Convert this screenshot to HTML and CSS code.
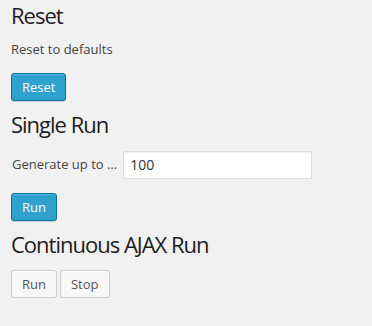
FILE: index.html
```html
<!DOCTYPE html>
<html>
<head>
<meta charset="utf-8">
<link rel="stylesheet" href="styles.css">
</head>
<body>
<div class="wrap">
  <section class="section">
    <h2 class="title">Reset</h2>
    <p class="desc">Reset to defaults</p>
    <div class="actions">
      <button class="btn btn-primary">Reset</button>
    </div>
  </section>
  <section class="section">
    <h2 class="title">Single Run</h2>
    <div class="field">
      <label class="label" for="count">Generate up to …</label>
      <input class="input" id="count" type="text" value="100">
    </div>
    <div class="actions">
      <button class="btn btn-primary">Run</button>
    </div>
  </section>
  <section class="section">
    <h2 class="title">Continuous AJAX Run</h2>
    <div class="actions actions-row">
      <button class="btn">Run</button>
      <button class="btn">Stop</button>
    </div>
  </section>
</div>
</body>
</html>
```
FILE: styles.css
```css
html, body {
  margin: 0;
  padding: 0;
  background: #f1f1f1;
}
body {
  font-family: "Open Sans", "Liberation Sans", sans-serif;
  font-size: 13px;
  line-height: 1.5;
  color: #444;
}
.wrap {
  padding: 1px 0 0 11px;
}
.section {
  display: flex;
  flex-direction: column;
  align-items: flex-start;
}
.section + .section {
  margin-top: 9px;
}
.title {
  margin: 0;
  font-size: 22px;
  font-weight: 400;
  letter-spacing: -1px;
  line-height: 29px;
  color: #1d1d1d;
}
.desc {
  margin: 10px 0 13px;
}
.field {
  display: flex;
  align-items: center;
  gap: 6px;
  margin: 12px 0 14px;
}
.label {
  padding-left: 1px;
}
.input {
  box-sizing: border-box;
  width: 189px;
  height: 28px;
  margin: 0;
  padding: 0 6px;
  border: 1px solid #ddd;
  background: #fff;
  box-shadow: inset 0 1px 2px rgba(0,0,0,.07);
  font-family: "Open Sans", "Liberation Sans", sans-serif;
  font-size: 14px;
  color: #333;
  outline: none;
}
.actions-row {
  display: flex;
  gap: 3px;
  margin-top: 11px;
}
.btn {
  box-sizing: border-box;
  height: 28px;
  margin: 0;
  padding: 0 10px 1px;
  border: 1px solid #ccc;
  border-radius: 3px;
  background: #f7f7f7;
  box-shadow: inset 0 1px 0 #fff, 0 1px 0 rgba(0,0,0,.08);
  font-family: "Open Sans", "Liberation Sans", sans-serif;
  font-size: 13px;
  line-height: 26px;
  color: #555;
  cursor: pointer;
}
.btn-primary {
  background: #2ea2cc;
  border-color: #0074a2;
  box-shadow: inset 0 1px 0 rgba(120,200,230,.5), 0 1px 0 rgba(0,0,0,.15);
  color: #fff;
}
```
